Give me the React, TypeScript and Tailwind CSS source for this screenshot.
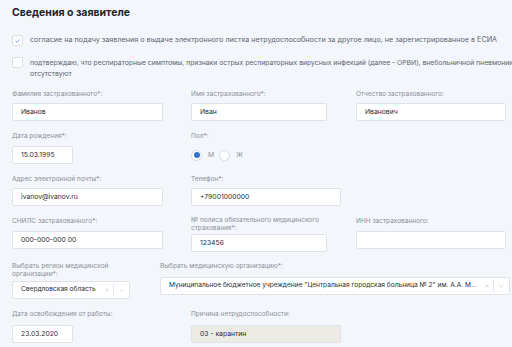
import { ChevronDown, X } from "lucide-react";

const font = { fontFamily: "Inter, 'Noto Sans', sans-serif" };

function Label({ children, two }: { children: React.ReactNode; two?: boolean }) {
  return (
    <div className={`text-[6.5px] text-[#8a909a] ${two ? "leading-[8px]" : "leading-[10px]"}`}>{children}</div>
  );
}

function Input({ value, className = "", disabled }: { value?: string; className?: string; disabled?: boolean }) {
  return (
    <div
      className={`h-[18px] border border-[#dfe3e8] rounded-[2px] flex items-center px-2 text-[6.8px] text-[#2a2d33] ${
        disabled ? "bg-[#ecebe6]" : "bg-white"
      } ${className}`}
    >
      {value}
    </div>
  );
}

function Select({ value, className = "" }: { value: string; className?: string }) {
  return (
    <div
      className={`h-[18px] border border-[#dfe3e8] rounded-[2px] bg-white flex items-center pl-2 text-[6.6px] text-[#2a2d33] ${className}`}
    >
      <span className="flex-1 whitespace-nowrap">{value}</span>
      <X className="w-[6px] h-[6px] text-[#b9bec6] mx-[3px] shrink-0" strokeWidth={2} />
      <span className="w-px h-[12px] bg-[#e3e6ea] shrink-0" />
      <ChevronDown className="w-[7px] h-[7px] text-[#b9bec6] mx-[4px] shrink-0" strokeWidth={2} />
    </div>
  );
}

function Checkbox({ checked }: { checked?: boolean }) {
  return (
    <div className="w-[11px] h-[11px] shrink-0 border border-[#d9dee5] rounded-[2px] bg-white flex items-center justify-center">
      {checked && (
        <svg width="5" height="4" viewBox="0 0 5 4">
          <path d="M0.6 2 L2 3.3 L4.4 0.6" fill="none" stroke="#5b8fd6" strokeWidth="0.8" />
        </svg>
      )}
    </div>
  );
}

function Radio({ checked, label }: { checked?: boolean; label: string }) {
  return (
    <div className="flex items-center gap-[6px]">
      <div className="w-[11px] h-[11px] rounded-full border border-[#d6dbe2] bg-white flex items-center justify-center">
        {checked && <div className="w-[6px] h-[6px] rounded-full bg-[#2f74d0]" />}
      </div>
      <span className="text-[6.8px] text-[#8a909a]">{label}</span>
    </div>
  );
}

export default function App() {
  return (
    <div className="w-[512px] h-[347px] bg-[#f3f6fa] overflow-hidden pl-[12px] pt-[6px]" style={font}>
      <h2 className="text-[10.5px] font-bold text-[#1f2329] leading-[14px]">Сведения о заявителе</h2>

      {/* Checkboxes */}
      <div className="mt-[15px] flex items-center gap-[7px]">
        <Checkbox checked />
        <span className="text-[7.2px] text-[#5d6470]">
          согласие на подачу заявления о выдаче электронного листка нетрудоспособности за другое лицо, не
          зарегистрированное в ЕСИА
        </span>
      </div>
      <div className="mt-[11px] flex items-start gap-[7px]">
        <Checkbox />
        <span className="text-[6.8px] text-[#5d6470] leading-[11px] whitespace-nowrap">
          подтверждаю, что респираторные симптомы, признаки острых респираторных вирусных инфекций (далее - ОРВИ),
          внебольничной пневмонии
          <br />
          отсутствуют
        </span>
      </div>

      {/* Fields */}
      <div className="mt-[10px] flex flex-col gap-[10px]">
        {/* Row 1 */}
        <div className="grid grid-cols-[179px_165px_150px] items-start">
          <div className="flex flex-col gap-[4px]">
            <Label>Фамилия застрахованного*:</Label>
            <Input value="Иванов" className="w-[151px]" />
          </div>
          <div className="flex flex-col gap-[4px]">
            <Label>Имя застрахованного*:</Label>
            <Input value="Иван" className="w-[136px]" />
          </div>
          <div className="flex flex-col gap-[4px]">
            <Label>Отчество застрахованного:</Label>
            <Input value="Иванович" className="w-[150px]" />
          </div>
        </div>

        {/* Row 2 */}
        <div className="grid grid-cols-[179px_165px_150px] items-start">
          <div className="flex flex-col gap-[5px]">
            <Label>Дата рождения*:</Label>
            <Input value="15.03.1995" className="w-[61px]" />
          </div>
          <div className="flex flex-col gap-[5px]">
            <Label>Пол*:</Label>
            <div className="h-[18px] flex items-center gap-[5px]">
              <Radio checked label="М" />
              <Radio label="Ж" />
            </div>
          </div>
        </div>

        {/* Row 3 */}
        <div className="grid grid-cols-[179px_165px_150px] items-start">
          <div className="flex flex-col gap-[4px]">
            <Label>Адрес электронной почты*:</Label>
            <Input value="ivanov@ivanov.ru" className="w-[151px]" />
          </div>
          <div className="flex flex-col gap-[4px]">
            <Label>Телефон*:</Label>
            <Input value="+79001000000" className="w-[150px]" />
          </div>
        </div>

        {/* Row 4 */}
        <div className="grid grid-cols-[179px_165px_150px] items-start">
          <div className="flex flex-col gap-[5px]">
            <Label>СНИЛС застрахованного*:</Label>
            <Input value="000-000-000 00" className="w-[151px]" />
          </div>
          <div className="flex flex-col gap-[2px]">
            <Label two>
              № полиса обязательного медицинского
              <br />
              страхования*:
            </Label>
            <Input value="123456" className="w-[136px]" />
          </div>
          <div className="flex flex-col gap-[5px]">
            <Label>ИНН застрахованного:</Label>
            <Input className="w-[150px]" />
          </div>
        </div>

        {/* Row 5 */}
        <div className="grid grid-cols-[148px_1fr] items-start">
          <div className="flex flex-col gap-[3px]">
            <Label two>
              Выбрать регион медицинской
              <br />
              организации*:
            </Label>
            <Select value="Свердловская область" className="w-[118px]" />
          </div>
          <div className="flex flex-col gap-[7px]">
            <Label two>Выбрать медицинскую организацию*:</Label>
            <Select
              value={'Муниципальное бюджетное учреждение "Центральная городская больница № 2" им. А.А. М...'}
              className="w-[350px]"
            />
          </div>
        </div>

        {/* Row 6 */}
        <div className="grid grid-cols-[179px_165px_150px] items-start">
          <div className="flex flex-col gap-[6px]">
            <Label>Дата освобождения от работы:</Label>
            <Input value="23.03.2020" className="w-[61px]" />
          </div>
          <div className="flex flex-col gap-[6px]">
            <Label>Причина нетрудоспособности:</Label>
            <Input value="03 - карантин" disabled className="w-[150px]" />
          </div>
        </div>
      </div>
    </div>
  );
}
